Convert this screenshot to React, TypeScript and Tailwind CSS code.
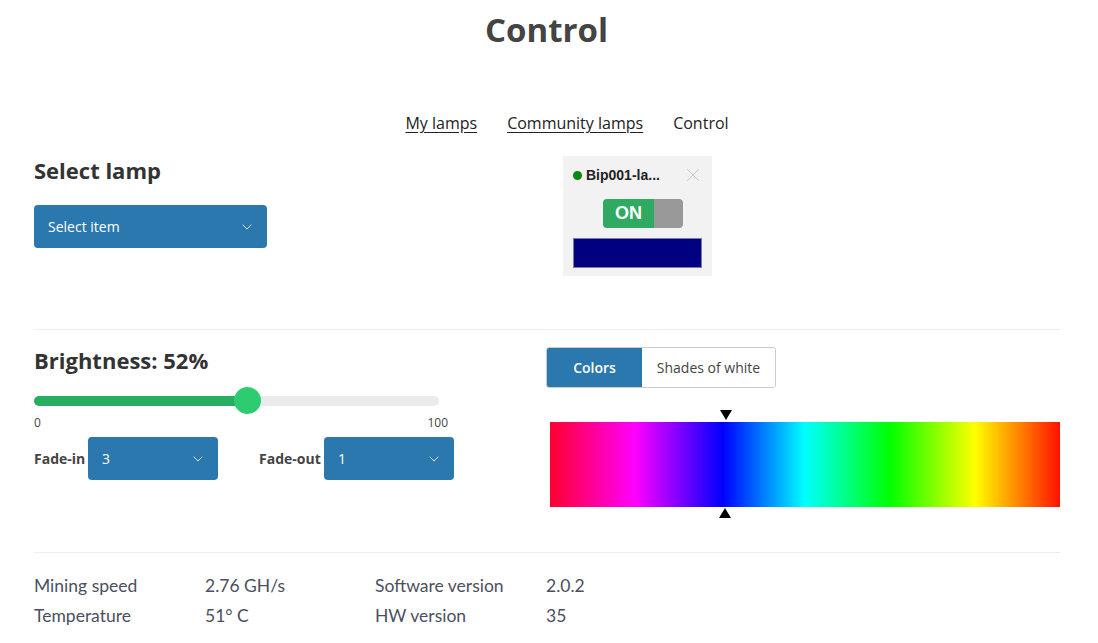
import {ChevronDown, X} from 'lucide-react'

const stats = [
  ['Mining speed', '2.76 GH/s', 'Software version', '2.0.2'],
  ['Temperature', '51° C', 'HW version', '35'],
]

function Dropdown({value, className}: {value: string; className: string}) {
  return (
    <div
      className={`flex items-center justify-between rounded-[4px] bg-[#2a78ad] pl-[14px] pr-[12px] text-[14px] text-white ${className}`}
    >
      <span>{value}</span>
      <ChevronDown className="h-[16px] w-[16px]" strokeWidth={1.25} />
    </div>
  )
}

export default function App() {
  return (
    <div className="min-h-[643px] bg-white font-['Open_Sans',sans-serif] text-[#444]">
      <h1 className="pr-[5px] pt-[8px] text-center text-[33px] font-bold leading-[44px] text-[#444]">Control</h1>

      <nav className="mt-[59px] flex justify-center gap-[30px] pl-[36px] text-[16px] leading-[24px] text-[#222]">
        <a className="underline underline-offset-[3px]">My lamps</a>
        <a className="underline underline-offset-[3px]">Community lamps</a>
        <span>Control</span>
      </nav>

      <div className="ml-[34px] mr-[38px]">
        {/* lamp selection */}
        <div className="mt-[10px] grid grid-cols-2 pb-[53px]">
          <div className="pt-[10px]">
            <h2 className="text-[22px] font-bold leading-[30px] text-[#333]">Select lamp</h2>
            <Dropdown value="Select item" className="mt-[20px] h-[43px] w-[233px]" />
          </div>
          <div className="pl-[16px] pt-[11px]">
            <div className="w-[149px] bg-[#f2f2f2] px-[10px] pb-[8px] pt-[8px]">
              <div className="flex items-center justify-between">
                <div className="flex items-center gap-[4px] font-['Liberation_Sans',Arial,sans-serif] text-[14px] font-bold text-[#222]">
                  <span className="h-[9px] w-[9px] rounded-full bg-[#0a8a0a]" />
                  <span>Bip001-la...</span>
                </div>
                <X className="mr-[-2px] h-[22px] w-[22px] text-[#bdbdbd]" strokeWidth={0.9} />
              </div>
              <div className="mt-[13px] flex justify-center pl-[11px]">
                <div className="flex h-[29px] w-[80px] overflow-hidden rounded-[4px]">
                  <div className="flex w-[51px] items-center justify-center bg-[#2eaa62] font-['Liberation_Sans',Arial,sans-serif] text-[18px] font-bold text-white">
                    ON
                  </div>
                  <div className="flex-1 bg-[#999]" />
                </div>
              </div>
              <div className="mt-[10px] h-[30px] border border-[#7c7ca8] bg-[#000080]" />
            </div>
          </div>
        </div>

        <div className="border-t border-[#eee]" />

        {/* brightness and colour */}
        <div className="grid grid-cols-2 pb-[45px] pt-[15px]">
          <div>
            <h2 className="text-[22px] font-bold leading-[30px] text-[#333]">Brightness: 52%</h2>
            <div className="relative mt-[21px] h-[10px] w-[405px] rounded-full bg-[#ebebeb]">
              <div className="h-full w-[214px] rounded-full bg-[#27ae60]" />
              <div className="absolute left-[200px] top-[-9px] h-[27px] w-[27px] rounded-full bg-[#2ecc71]" />
            </div>
            <div className="mt-[9px] flex w-[414px] justify-between text-[12px] leading-[16px] text-[#444]">
              <span>0</span>
              <span>100</span>
            </div>
            <div className="mt-[6px] flex items-center">
              <span className="w-[54px] text-[14px] font-bold text-[#444]">Fade-in</span>
              <Dropdown value="3" className="h-[43px] w-[130px]" />
              <span className="ml-[41px] w-[65px] text-[14px] font-bold text-[#444]">Fade-out</span>
              <Dropdown value="1" className="h-[43px] w-[130px]" />
            </div>
          </div>

          <div className="ml-[-1px] pt-[2px]">
            <div className="flex h-[41px] w-[230px] overflow-hidden rounded-[3px] border border-[#ccc] text-[14px]">
              <div className="flex w-[95px] items-center justify-center bg-[#2a78ad] font-semibold text-white">Colors</div>
              <div className="flex flex-1 items-center justify-center bg-white text-[#444]">Shades of white</div>
            </div>
            <div className="relative ml-[4px] mt-[34px] h-[85px] bg-[linear-gradient(to_right,#ff0030_0%,#ff00ff_16.67%,#0000ff_33.9%,#00ffff_50%,#00ff00_66.67%,#ffff00_83.33%,#ff1000_100%)]">
              <div className="absolute left-[170px] top-[-12px] h-0 w-0 border-x-[6px] border-t-[10px] border-x-transparent border-t-black" />
              <div className="absolute bottom-[-11px] left-[169px] h-0 w-0 border-x-[6px] border-b-[10px] border-x-transparent border-b-black" />
            </div>
          </div>
        </div>

        <div className="border-t border-[#eee]" />

        {/* stats */}
        <div className="pt-[18px] font-['Lato',sans-serif] text-[17.5px] leading-[30px] text-[#4a5060]">
          {stats.map((row) => (
            <div key={row[0]} className="flex">
              <span className="w-[171px]">{row[0]}</span>
              <span className="w-[170px]">{row[1]}</span>
              <span className="w-[171px]">{row[2]}</span>
              <span>{row[3]}</span>
            </div>
          ))}
        </div>
      </div>
    </div>
  )
}
